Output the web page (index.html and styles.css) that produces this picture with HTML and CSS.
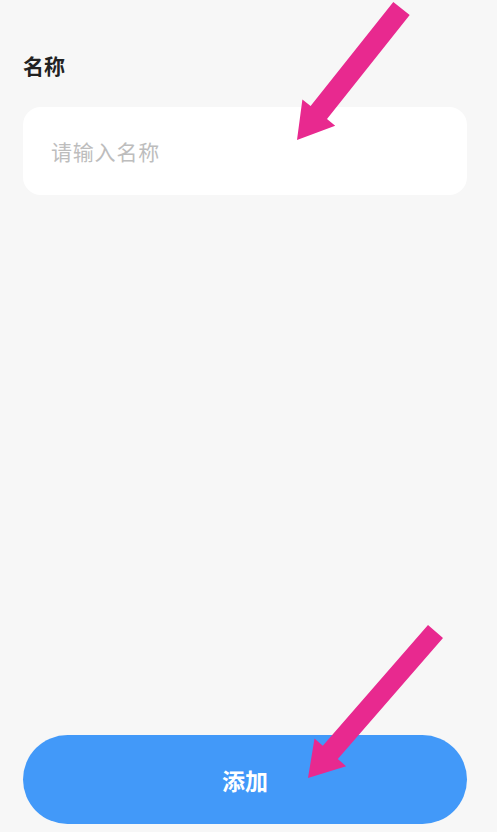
FILE: index.html
```html
<!DOCTYPE html>
<html lang="zh-CN">
<head>
<meta charset="utf-8">
<title>添加</title>
<link rel="stylesheet" href="styles.css">
</head>
<body>
<div class="page">
  <div class="field">
    <div class="label">名称</div>
    <div class="input"><span class="placeholder">请输入名称</span></div>
  </div>
  <button class="add-btn">添加</button>
</div>
<svg class="annotations" width="497" height="832" viewBox="0 0 497 832" xmlns="http://www.w3.org/2000/svg">
  <polygon fill="#e8298f" points="409.7,15 327,119.1 335.2,125.7 297,140 302.4,99.5 310.6,106.1 393.3,2"/>
  <polygon fill="#e8298f" points="443,638.1 337.8,759 346.1,766.2 308,778 314.5,738.6 322.8,745.8 428,624.9"/>
</svg>
</body>
</html>
```
FILE: styles.css
```css
* { box-sizing: border-box; }
html, body {
  margin: 0;
  padding: 0;
  background: #f7f7f7;
  font-family: "Noto Sans CJK SC", "Noto Sans", sans-serif;
}
body { position: relative; }
.page {
  min-height: 832px;
  display: flex;
  flex-direction: column;
  padding: 0 30px 8px 23px;
}
.field {
  display: flex;
  flex-direction: column;
  padding-top: 54px;
}
.label {
  font-size: 21px;
  line-height: 22px;
  font-weight: 700;
  color: #222;
}
.input {
  margin-top: 31px;
  height: 88px;
  background: #fff;
  border-radius: 18px;
  display: flex;
  align-items: center;
  padding-left: 28px;
}
.placeholder {
  font-size: 21px;
  color: #bdbdbd;
  letter-spacing: 0.8px;
}
.add-btn {
  margin-top: auto;
  height: 89px;
  border: none;
  border-radius: 45px;
  background: #4299f9;
  color: #fff;
  font-family: inherit;
  font-size: 23px;
  font-weight: 700;
  padding: 0;
}
.annotations {
  position: absolute;
  left: 0;
  top: 0;
  pointer-events: none;
}
```
